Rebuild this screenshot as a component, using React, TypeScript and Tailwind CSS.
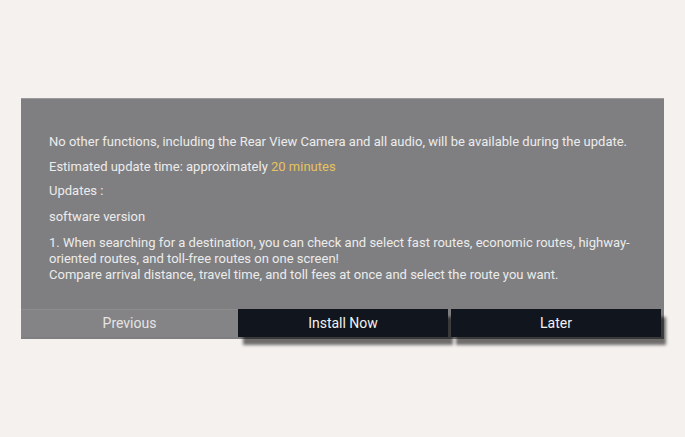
export default function App() {
  return (
    <div className="w-[685px] h-[437px] bg-[#f4f1ef] pt-[98px] pl-[21px]" style={{ fontFamily: 'Roboto, "Noto Sans", sans-serif' }}>
      <div className="w-[643px] h-[241px] bg-[#7f7f81] border-t border-[#9a9a9c] flex flex-col">
        {/* Message */}
        <div className="flex-1 pl-[28px] pr-[30px] pt-[35px] text-[13px] text-[#ececec] leading-[16px]">
          <p>No other functions, including the Rear View Camera and all audio, will be available during the update.</p>
          <p className="mt-[9px]">
            Estimated update time: approximately <span className="text-[#e6c35c]">20 minutes</span>
          </p>
          <p className="mt-[8px]">Updates :</p>
          <p className="mt-[10px]">software version</p>
          <p className="mt-[10px]">
            1. When searching for a destination, you can check and select fast routes, economic routes, highway-oriented routes, and toll-free routes on one screen!
            <br />
            Compare arrival distance, travel time, and toll fees at once and select the route you want.
          </p>
        </div>

        {/* Buttons */}
        <div className="flex h-[28px] mb-[2px] text-[14px] text-[#f2f2f2]">
          <button className="w-[217px] bg-[#848486] border-t border-[#8c8c8e] text-[#e4e4e4] flex items-center justify-center">
            Previous
          </button>
          <button className="w-[210px] bg-[#11151d] flex items-center justify-center shadow-[5px_8px_3px_rgba(0,0,0,0.55)]">
            Install Now
          </button>
          <button className="w-[210px] ml-[3px] bg-[#11151d] flex items-center justify-center shadow-[5px_8px_3px_rgba(0,0,0,0.55)]">
            Later
          </button>
        </div>
      </div>
    </div>
  );
}
